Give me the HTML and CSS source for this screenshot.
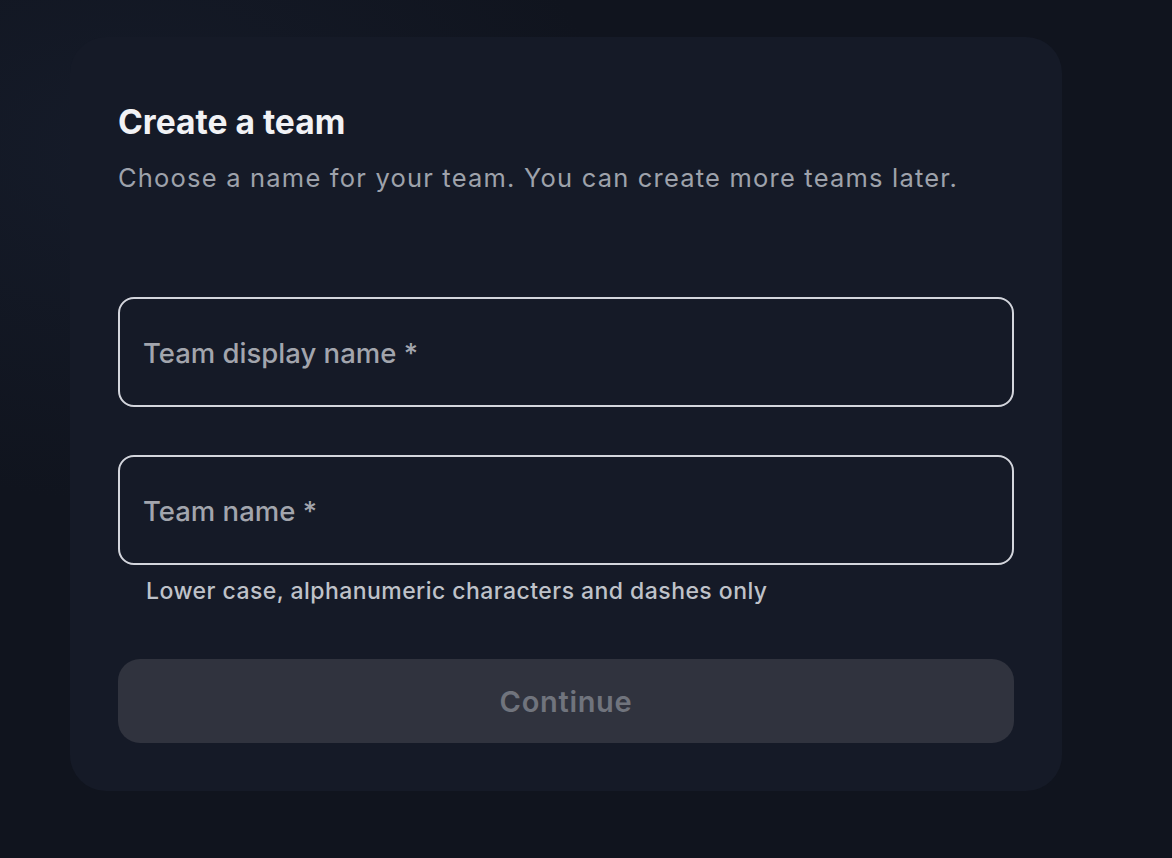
FILE: index.html
```html
<!DOCTYPE html>
<html lang="en">
<head>
<meta charset="utf-8">
<title>Create a team</title>
<link rel="stylesheet" href="styles.css">
</head>
<body>
<main class="page">
  <section class="card">
    <h1 class="title">Create a team</h1>
    <p class="subtitle">Choose a name for your team. You can create more teams later.</p>
    <form class="form">
      <div class="field">
        <div class="input"><span class="label">Team display name *</span></div>
      </div>
      <div class="field">
        <div class="input"><span class="label">Team name *</span></div>
        <p class="helper">Lower case, alphanumeric characters and dashes only</p>
      </div>
      <button type="button" class="button" disabled>Continue</button>
    </form>
  </section>
</main>
</body>
</html>
```
FILE: styles.css
```css
* { box-sizing: border-box; }
html, body {
  margin: 0;
  height: 100%;
}
body {
  background: radial-gradient(ellipse 700px 500px at 120px 150px, #151b29 0%, #10141e 70%), #10131c;
  font-family: Inter, "Noto Sans", sans-serif;
  overflow: hidden;
}
.page {
  padding: 37px 0 0 70px;
}
.card {
  width: 992px;
  height: 754px;
  background: #151a27;
  border-radius: 36px;
  padding: 65px 48px 48px;
  display: flex;
  flex-direction: column;
}
.title {
  margin: 0;
  font-size: 33.6px;
  line-height: 40px;
  font-weight: 700;
  color: #f1f2f5;
}
.subtitle {
  margin: 20px 0 0;
  font-size: 25.5px;
  line-height: 32px;
  font-weight: 400;
  color: #9ea2ab;
  letter-spacing: 1.2px;
}
.form {
  margin-top: 103px;
  display: flex;
  flex-direction: column;
  gap: 48px;
}
.field {
  display: flex;
  flex-direction: column;
}
.input {
  height: 110px;
  border: 2px solid #d3d5dc;
  border-radius: 16px;
  display: flex;
  align-items: center;
  padding: 2px 23px 0;
}
.label {
  font-size: 27.5px;
  font-weight: 500;
  color: #a2a5ad;
}
.helper {
  margin: 12px 0 0;
  padding-left: 28px;
  font-size: 23px;
  line-height: 28px;
  font-weight: 500;
  color: #bfc2c9;
  letter-spacing: 0.45px;
}
.button {
  margin-top: 6px;
  height: 84px;
  border: none;
  border-radius: 22px;
  background: #30333e;
  color: #70747d;
  font-family: inherit;
  font-size: 29px;
  font-weight: 600;
  letter-spacing: 0.7px;
  padding-top: 2px;
}
```
